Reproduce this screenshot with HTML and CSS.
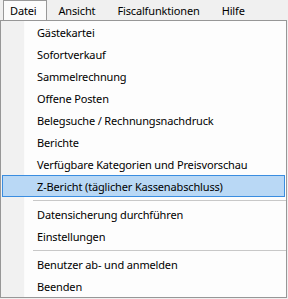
FILE: index.html
```html
<!DOCTYPE html>
<html lang="de">
<head>
<meta charset="utf-8">
<link rel="stylesheet" href="styles.css">
</head>
<body>
<div class="menubar">
  <div class="top-item open">Datei</div>
  <div class="top-item">Ansicht</div>
  <div class="top-item">Fiscalfunktionen</div>
  <div class="top-item">Hilfe</div>
</div>
<div class="dropdown">
  <div class="item">Gästekartei</div>
  <div class="item">Sofortverkauf</div>
  <div class="item">Sammelrechnung</div>
  <div class="item">Offene Posten</div>
  <div class="item">Belegsuche / Rechnungsnachdruck</div>
  <div class="item">Berichte</div>
  <div class="item">Verfügbare Kategorien und Preisvorschau</div>
  <div class="item selected">Z-Bericht (täglicher Kassenabschluss)</div>
  <div class="sep"></div>
  <div class="item">Datensicherung durchführen</div>
  <div class="item">Einstellungen</div>
  <div class="sep"></div>
  <div class="item">Benutzer ab- und anmelden</div>
  <div class="item">Beenden</div>
</div>
</body>
</html>
```
FILE: styles.css
```css
html, body {
  margin: 0;
  padding: 0;
  background: #f0f0f0;
  font-family: "Noto Sans", "Open Sans", sans-serif;
  font-size: 11px;
  letter-spacing: -0.15px;
  color: #000;
}
.menubar {
  display: flex;
  gap: 4px;
  height: 20px;
  padding-left: 3px;
  box-sizing: border-box;
  background: #f0f0f0;
}
.top-item {
  padding: 0 10px 0 6px;
  line-height: 19px;
  height: 20px;
  box-sizing: border-box;
  border: 1px solid transparent;
  border-bottom: none;
}
.top-item.open {
  background: #fcfcfc;
  border-color: #999;
}
.dropdown {
  width: 287px;
  box-sizing: border-box;
  border: 1px solid #979797;
  background: linear-gradient(to right, #f1f1f1 0, #f1f1f1 23px, #fbfbfb 23px, #fbfbfb 24px, #fdfdfd 24px);
  display: flex;
  flex-direction: column;
}
.item {
  height: 22px;
  line-height: 21px;
  padding-left: 34px;
  margin: 0 1px;
  box-sizing: border-box;
  border: 1px solid transparent;
  white-space: nowrap;
}
.item.selected {
  background: #b9d8f5;
  border-color: #3a8de0;
}
.sep {
  height: 6px;
  display: flex;
  align-items: center;
  padding-left: 32px;
}
.sep::after {
  content: "";
  flex: 1;
  height: 1px;
  background: #c8c8c8;
}
```
